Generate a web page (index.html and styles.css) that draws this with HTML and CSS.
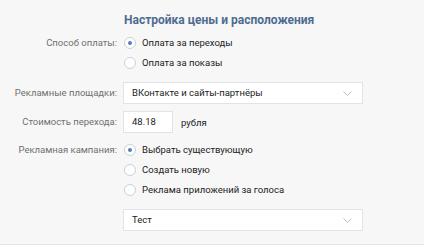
FILE: index.html
```html
<!DOCTYPE html>
<html lang="ru">
<head>
<meta charset="UTF-8">
<title>Настройка цены и расположения</title>
<link rel="stylesheet" href="styles.css">
</head>
<body>
<div class="panel">
  <div class="title">Настройка цены и расположения</div>

  <div class="row">
    <div class="label">Способ оплаты:</div>
    <div class="control">
      <div class="radio checked"><span class="dot"></span>Оплата за переходы</div>
      <div class="radio"><span class="dot"></span>Оплата за показы</div>
    </div>
  </div>

  <div class="row gap9">
    <div class="label field-label">Рекламные площадки:</div>
    <div class="control">
      <div class="select">ВКонтакте и сайты-партнёры
        <svg class="chev" width="9" height="5" viewBox="0 0 9 5"><path d="M0.5 0.5 L4.5 4.5 L8.5 0.5" fill="none" stroke="#b4bfcb" stroke-width="1"/></svg>
      </div>
    </div>
  </div>

  <div class="row gap7">
    <div class="label field-label">Стоимость перехода:</div>
    <div class="control inline">
      <div class="input">48.18</div>
      <span class="unit">рубля</span>
    </div>
  </div>

  <div class="row gap7">
    <div class="label">Рекламная кампания:</div>
    <div class="control">
      <div class="radio checked"><span class="dot"></span>Выбрать существующую</div>
      <div class="radio"><span class="dot"></span>Создать новую</div>
      <div class="radio"><span class="dot"></span>Реклама приложений за голоса</div>
      <div class="select campaign">Тест
        <svg class="chev" width="9" height="5" viewBox="0 0 9 5"><path d="M0.5 0.5 L4.5 4.5 L8.5 0.5" fill="none" stroke="#b4bfcb" stroke-width="1"/></svg>
      </div>
    </div>
  </div>
</div>
</body>
</html>
```
FILE: styles.css
```css
body {
  margin: 0;
  background: #fff;
  font-family: Roboto, "Open Sans", Arial, sans-serif;
  font-size: 9.5px;
  color: #000;
}
.panel {
  background: #f7f7f7;
  height: 245px;
  box-sizing: border-box;
  padding-top: 12px;
  border-bottom: 1px solid #e3e4e8;
}
.title {
  margin-left: 124px;
  height: 16px;
  line-height: 16px;
  font-size: 12px;
  font-weight: bold;
  color: #4e6c91;
  margin-bottom: 5px;
}
.row { display: flex; }
.row.gap9 { margin-top: 9px; }
.row.gap7 { margin-top: 7px; }
.label {
  width: 117px;
  text-align: right;
  color: #707070;
  line-height: 20px;
  white-space: nowrap;
  flex-shrink: 0;
}
.field-label { line-height: 22px; }
.control { margin-left: 6px; }
.control.inline { display: flex; align-items: center; }
.radio {
  height: 20px;
  line-height: 20px;
  display: flex;
  align-items: center;
  color: #222;
  white-space: nowrap;
}
.dot {
  width: 12px;
  height: 12px;
  border: 1px solid #c9d2dc;
  border-radius: 50%;
  background: #fff;
  box-sizing: border-box;
  margin: 0 6px 0 1px;
  position: relative;
}
.radio.checked .dot::after {
  content: "";
  position: absolute;
  left: 3px;
  top: 3px;
  width: 4px;
  height: 4px;
  border-radius: 50%;
  background: #5181b8;
}
.select {
  width: 240px;
  height: 22px;
  box-sizing: border-box;
  background: #fff;
  border: 1px solid #e1e3e8;
  padding: 0 8px;
  line-height: 20px;
  color: #222;
  display: flex;
  justify-content: space-between;
  align-items: center;
}
.select.campaign { margin-top: 9px; }
.chev { margin-right: 2px; }
.input {
  width: 50px;
  height: 22px;
  box-sizing: border-box;
  background: #fff;
  border: 1px solid #e1e3e8;
  padding: 0 8px;
  line-height: 20px;
  color: #222;
}
.unit { margin-left: 8px; color: #222; }
```
